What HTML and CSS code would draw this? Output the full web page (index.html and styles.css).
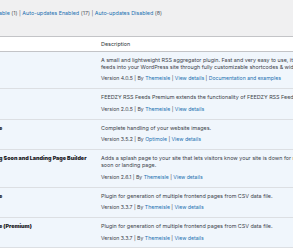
FILE: index.html
```html
<!DOCTYPE html>
<html>
<head>
<meta charset="utf-8">
<link rel="stylesheet" href="styles.css">
</head>
<body>
<div class="subsubsub">
  <a>able</a> <span class="count">(1)</span> <span class="sep">|</span>
  <a>Auto-updates Enabled</a> <span class="count">(17)</span> <span class="sep">|</span>
  <a>Auto-updates Disabled</a> <span class="count">(8)</span>
</div>
<div class="plugins">
  <div class="row head">
    <div class="name"></div>
    <div class="desc">Description</div>
  </div>
  <div class="row active">
    <div class="name"></div>
    <div class="desc">
      <p class="text">A small and lightweight RSS aggregator plugin. Fast and very easy to use, it allows you to aggregate multiple RSS<br>feeds into your WordPress site through fully customizable shortcodes &amp; widgets.</p>
      <p class="meta">Version 4.0.5 | By <a>Themeisle</a> | <a>View details</a> | <a>Documentation and examples</a></p>
    </div>
  </div>
  <div class="row active">
    <div class="name"></div>
    <div class="desc">
      <p class="text">FEEDZY RSS Feeds Premium extends the functionality of FEEDZY RSS Feeds.</p>
      <p class="meta">Version 2.0.5 | By <a>Themeisle</a> | <a>View details</a></p>
    </div>
  </div>
  <div class="row active">
    <div class="name"><strong>e</strong></div>
    <div class="desc">
      <p class="text">Complete handling of your website images.</p>
      <p class="meta">Version 3.5.2 | By <a>Optimole</a> | <a>View details</a></p>
    </div>
  </div>
  <div class="row active">
    <div class="name"><strong>g Soon and Landing Page Builder</strong></div>
    <div class="desc">
      <p class="text">Adds a splash page to your site that lets visitors know your site is down for maintenance. It's perfect for a coming<br>soon or landing page.</p>
      <p class="meta">Version 2.6.1 | By <a>Themeisle</a> | <a>View details</a></p>
    </div>
  </div>
  <div class="row active">
    <div class="name"><strong>e</strong></div>
    <div class="desc">
      <p class="text">Plugin for generation of multiple frontend pages from CSV data file.</p>
      <p class="meta">Version 3.3.7 | By <a>Themeisle</a> | <a>View details</a></p>
    </div>
  </div>
  <div class="row active">
    <div class="name"><strong>e (Premium)</strong></div>
    <div class="desc">
      <p class="text">Plugin for generation of multiple frontend pages from CSV data file.</p>
      <p class="meta">Version 3.3.7 | By <a>Themeisle</a> | <a>View details</a></p>
    </div>
  </div>
</div>
</body>
</html>
```
FILE: styles.css
```css
html, body {
  margin: 0;
  padding: 0;
}
body {
  width: 293px;
  height: 248px;
  overflow: hidden;
  background: #f0f0f1;
  font-family: Inter, "Liberation Sans", Arial, sans-serif;
  font-size: 5.4px;
  color: #3c434a;
}
a {
  color: #2271b1;
}
.subsubsub {
  box-sizing: border-box;
  height: 36px;
  padding-top: 10px;
  line-height: 6px;
  white-space: nowrap;
  margin-left: -1px;
  color: #50575e;
  font-size: 5.4px;
}
.plugins {
  background: #fff;
  border-top: 1px solid #c3c4c7;
}
.row {
  display: grid;
  grid-template-columns: 101px auto;
  white-space: nowrap;
}
.head {
  padding: 3.5px 0 3px;
  line-height: 7px;
  color: #2c3338;
  border-bottom: 1px solid #c3c4c7;
}
.active {
  background: #f0f6fc;
  padding: 5px 0 5.5px;
  border-bottom: 1px solid #dcdfe3;
  line-height: 7.2px;
}
.name {
  margin-left: -1px;
  color: #1d2327;
  font-weight: 600;
}
.text, .meta {
  margin: 0;
}
.meta {
  margin-top: 4.5px;
  font-size: 5.15px;
}
```
